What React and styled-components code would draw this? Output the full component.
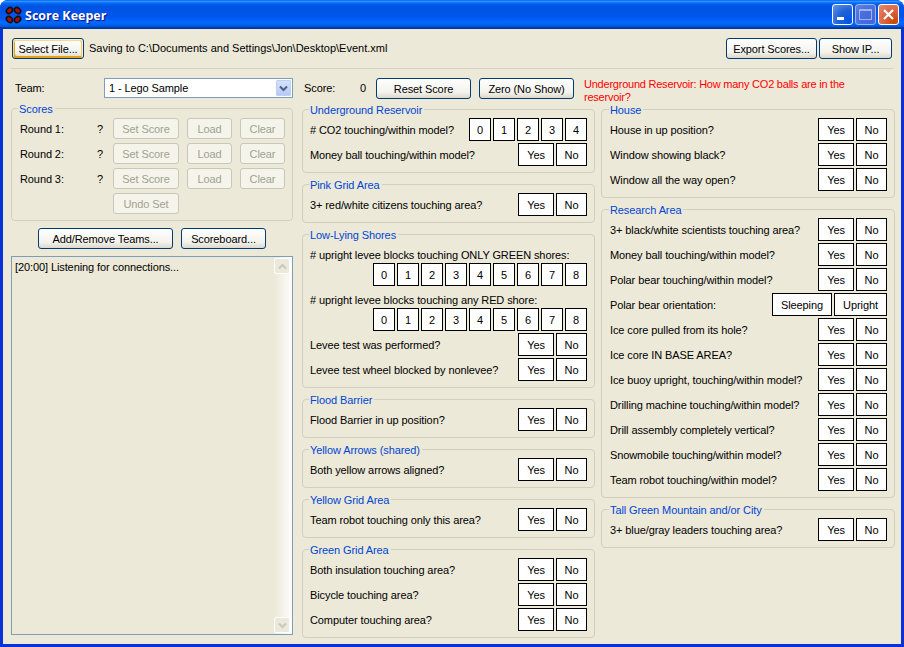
import React from "react";
import styled, { createGlobalStyle } from "styled-components";

const GlobalStyle = createGlobalStyle`
  html, body { margin: 0; padding: 0; background: #fff; }
  body { font-family: "Liberation Sans", Arial, sans-serif; font-size: 11px; letter-spacing: -0.1px; color: #000; }
  * { box-sizing: border-box; }
`;

const Window = styled.div`
  width: 904px;
  height: 647px;
  display: flex;
  flex-direction: column;
  background: #0831d9;
  border-radius: 8px 8px 0 0;
  overflow: hidden;
`;

const TitleBar = styled.div`
  height: 29px;
  flex: none;
  display: flex;
  align-items: center;
  padding: 0 5px 0 5px;
  background: linear-gradient(180deg, #0058ee 0%, #3593ff 4%, #288eff 6%, #127dff 8%, #036ffc 10%, #0262ee 14%, #0057e5 20%, #0054e3 24%, #0055eb 56%, #005bf5 66%, #026afe 76%, #0062ef 86%, #0052d6 92%, #0040ab 94%, #003092 100%);
`;

const Title = styled.div`
  margin-left: 3px;
  padding-top: 1px;
  flex: 1;
  color: #fff;
  font-family: "Open Sans", sans-serif;
  font-size: 12.5px;
  font-weight: 700;
  letter-spacing: 0;
  text-shadow: 1px 1px 1px #0f1089;
`;

const CaptionButton = styled.div`
  width: 21px;
  height: 21px;
  margin-left: 2px;
  border: 1px solid ${({ $kind }) => ($kind === "off" ? "#9fb3ee" : "#fff")};
  border-radius: 3px;
  display: flex;
  align-items: center;
  justify-content: center;
  background: ${({ $kind }) =>
    $kind === "close"
      ? "radial-gradient(circle at 80% 85%, #cc4600 0%, #dc6543 50%, #e58a6f 100%)"
      : $kind === "off"
      ? "radial-gradient(circle at 85% 85%, #3f66dd 0%, #4a6fdf 60%, #6385e4 100%)"
      : "radial-gradient(circle at 85% 85%, #0054e9 0%, #2263d5 50%, #6696eb 100%)"};
`;

const Client = styled.div`
  flex: 1;
  margin: 0 3px 3px 3px;
  background: #ece9d8;
  display: flex;
  flex-direction: column;
  min-height: 0;
`;

const Toolbar = styled.div`
  height: 31px;
  margin: 9px 8px 0 8px;
  padding: 0 1px;
  display: flex;
  align-items: flex-start;
  border-bottom: 1px solid #d3d1c5;
`;

const SavePath = styled.span`
  margin-left: 5px;
  line-height: 21px;
  letter-spacing: 0;
  flex: 1;
`;

const Btn = styled.button`
  width: ${({ $w }) => $w}px;
  height: 21px;
  flex: none;
  padding: 0;
  margin: ${({ $m }) => $m || 0};
  border: 1px solid ${({ disabled }) => (disabled ? "#c9c7ba" : "#003c74")};
  border-radius: 3px;
  font: inherit;
  letter-spacing: inherit;
  color: ${({ disabled }) => (disabled ? "#a1a192" : "#000")};
  background: ${({ disabled }) =>
    disabled ? "#f5f4ea" : "linear-gradient(180deg, #fff 0%, #f3f2ec 70%, #dcd8cc 100%)"};
  box-shadow: ${({ $focus }) =>
    $focus ? "inset -1px 1px #fff0cf, inset 1px 2px #fdd889, inset -2px 2px #fbc761, inset 2px -2px #e5a01a" : "none"};
`;

const Body = styled.div`
  flex: 1;
  display: flex;
  min-height: 0;
  padding: 9px 0 0 8px;
`;

const LeftCol = styled.div`
  width: 282px;
  display: flex;
  flex-direction: column;
  margin-right: 9px;
`;

const MidCol = styled.div`
  width: 293px;
  margin-right: 6px;
`;

const TeamRow = styled.div`
  height: 20px;
  margin-bottom: 10px;
  display: flex;
  align-items: center;
`;

const TeamLabel = styled.span`
  width: 93px;
  padding-left: 4px;
`;

const Combo = styled.div`
  width: 189px;
  height: 20px;
  background: #fff;
  border: 1px solid #7f9db9;
  display: flex;
  align-items: center;
  justify-content: space-between;
  padding: 1px 1px 1px 4px;
`;

const ComboArrow = styled.div`
  width: 15px;
  height: 16px;
  border: 1px solid #bfcff2;
  border-radius: 1px;
  background: linear-gradient(180deg, #d6e1fb 0%, #b4c9f7 100%);
  display: flex;
  align-items: center;
  justify-content: center;
`;

const Group = styled.div`
  position: relative;
  border: 1px solid #d0d0bf;
  border-radius: 4px;
  padding: 8px 7px 6px 7px;
  margin-bottom: 11px;
  display: flex;
  flex-direction: column;
  gap: 2px;
`;

const Legend = styled.span`
  position: absolute;
  top: -7px;
  left: 6px;
  line-height: 14px;
  padding: 0 2px 0 1px;
  background: #ece9d8;
  color: #0046d5;
  white-space: nowrap;
`;

const RightCol = styled.div`
  width: 294px;

  ${Group} {
    padding-left: 8px;
  }

  ${Legend} {
    left: 7px;
  }
`;

const ScoreGrid = styled.div`
  display: grid;
  grid-template-columns: 77px 16px 66px 53px 53px;
  row-gap: 4px;
  align-items: center;
  margin: 1px 0 0 1px;
`;

const RoundBtnCell = styled.div`
  padding-left: 8px;
`;

const TeamActions = styled.div`
  display: flex;
  gap: 8px;
  margin: -4px 0 7px 27px;
`;

const LogBox = styled.div`
  flex: 1;
  margin-bottom: 9px;
  border: 1px solid #7f9db9;
  display: flex;
  min-height: 0;
`;

const LogText = styled.div`
  flex: 1;
  padding: 3px 3px;
  line-height: 14px;
`;

const ScrollBar = styled.div`
  width: 18px;
  padding: 1px 1px 1px 0;
  display: flex;
  flex-direction: column;
  justify-content: space-between;
  background: linear-gradient(90deg, #ece9d8 0%, #f6f5ef 60%, #fdfdfb 100%);
`;

const ScrollBtn = styled.div`
  width: 16px;
  height: 16px;
  border: 1px solid #fff;
  border-radius: 2px;
  background: #ebe9dc;
  display: flex;
  align-items: center;
  justify-content: center;
`;

const ScoreRow = styled.div`
  height: 31px;
  display: flex;
  align-items: flex-start;
  padding-left: 2px;
  line-height: 21px;
`;

const ScoreValue = styled.span`
  width: 72px;
  display: flex;
  justify-content: space-between;
  padding-right: 10px;
`;

const Prompt = styled.div`
  height: 31px;
  width: 300px;
  margin-left: -17px;
  color: #f00;
  line-height: 13px;
  letter-spacing: -0.23px;
`;

const Row = styled.div`
  display: flex;
  align-items: ${({ $stack }) => ($stack ? "flex-start" : "center")};
  flex-direction: ${({ $stack }) => ($stack ? "column" : "row")};
  justify-content: space-between;
  min-height: 23px;
`;

const RowLabel = styled.span`
  white-space: nowrap;
  height: ${({ $stack }) => ($stack ? "20px" : "auto")};
  line-height: ${({ $stack }) => ($stack ? "24px" : "normal")};
`;

const Choices = styled.div`
  display: flex;
  gap: 2px;
  align-self: flex-end;
  margin-left: auto;
`;

const Flat = styled.button`
  width: ${({ $w }) => $w}px;
  height: 23px;
  padding: 0;
  background: #fff;
  border: 1px solid #000;
  font: inherit;
  letter-spacing: inherit;
  color: #000;
`;

const widths = { Yes: 36, No: 31, Sleeping: 60, Upright: 53 };
const yesNo = ["Yes", "No"];
const digits = (n) => Array.from({ length: n }, (_, i) => String(i));

const middle = [
  {
    name: "Underground Reservoir",
    rows: [
      { label: "# CO2 touching/within model?", options: digits(5) },
      { label: "Money ball touching/within model?" },
    ],
  },
  { name: "Pink Grid Area", rows: [{ label: "3+ red/white citizens touching area?" }] },
  {
    name: "Low-Lying Shores",
    rows: [
      { label: "# upright levee blocks touching ONLY GREEN shores:", options: digits(9), stack: true },
      { label: "# upright levee blocks touching any RED shore:", options: digits(9), stack: true },
      { label: "Levee test was performed?" },
      { label: "Levee test wheel blocked by nonlevee?" },
    ],
  },
  { name: "Flood Barrier", rows: [{ label: "Flood Barrier in up position?" }] },
  { name: "Yellow Arrows (shared)", rows: [{ label: "Both yellow arrows aligned?" }] },
  { name: "Yellow Grid Area", rows: [{ label: "Team robot touching only this area?" }] },
  {
    name: "Green Grid Area",
    rows: [
      { label: "Both insulation touching area?" },
      { label: "Bicycle touching area?" },
      { label: "Computer touching area?" },
    ],
  },
];

const right = [
  {
    name: "House",
    rows: [
      { label: "House in up position?" },
      { label: "Window showing black?" },
      { label: "Window all the way open?" },
    ],
  },
  {
    name: "Research Area",
    rows: [
      { label: "3+ black/white scientists touching area?" },
      { label: "Money ball touching/within model?" },
      { label: "Polar bear touching/within model?" },
      { label: "Polar bear orientation:", options: ["Sleeping", "Upright"] },
      { label: "Ice core pulled from its hole?" },
      { label: "Ice core IN BASE AREA?" },
      { label: "Ice buoy upright, touching/within model?" },
      { label: "Drilling machine touching/within model?" },
      { label: "Drill assembly completely vertical?" },
      { label: "Snowmobile touching/within model?" },
      { label: "Team robot touching/within model?" },
    ],
  },
  { name: "Tall Green Mountain and/or City", rows: [{ label: "3+ blue/gray leaders touching area?" }] },
];

const Chevron = ({ up, color, width = 2 }) => (
  <svg width="9" height="7" viewBox="0 0 9 7">
    <path d={up ? "M1 5.5 L4.5 2 L8 5.5" : "M1 1.5 L4.5 5 L8 1.5"} fill="none" stroke={color} strokeWidth={width} />
  </svg>
);

const AppIcon = () => (
  <svg width="17" height="18" viewBox="0 0 17 18">
    {[
      [4.5, 4.5, -40],
      [12.5, 4.5, 40],
      [4.5, 13.5, 40],
      [12.5, 13.5, -40],
    ].map(([x, y, r]) => (
      <g key={`${x}-${y}`} transform={`rotate(${r} ${x} ${y})`}>
        <ellipse cx={x} cy={y} rx="4.2" ry="3.4" fill="#111" />
        <ellipse cx={x} cy={y} rx="2.6" ry="1.8" fill="#a01010" />
      </g>
    ))}
  </svg>
);

const QuestionGroup = ({ name, rows }) => (
  <Group>
    <Legend>{name}</Legend>
    {rows.map((row) => (
      <Row key={row.label} $stack={row.stack}>
        <RowLabel $stack={row.stack}>{row.label}</RowLabel>
        <Choices>
          {(row.options || yesNo).map((opt) => (
            <Flat key={opt} $w={widths[opt] || 22}>
              {opt}
            </Flat>
          ))}
        </Choices>
      </Row>
    ))}
  </Group>
);

const App = () => (
  <>
    <GlobalStyle />
    <Window>
      <TitleBar>
        <AppIcon />
        <Title>Score Keeper</Title>
        <CaptionButton>
          <svg width="13" height="13" viewBox="0 0 13 13">
            <rect x="1" y="9" width="7" height="3" fill="#fff" />
          </svg>
        </CaptionButton>
        <CaptionButton $kind="off">
          <svg width="13" height="13" viewBox="0 0 13 13">
            <rect x="0.5" y="1.5" width="12" height="10" fill="none" stroke="#9fb3ee" />
            <rect x="0" y="1" width="13" height="2" fill="#9fb3ee" />
          </svg>
        </CaptionButton>
        <CaptionButton $kind="close">
          <svg width="13" height="13" viewBox="0 0 13 13">
            <path d="M2 2 L11 11 M11 2 L2 11" stroke="#fff" strokeWidth="2.2" />
          </svg>
        </CaptionButton>
      </TitleBar>
      <Client>
        <Toolbar>
          <Btn $w={72} $focus>Select File...</Btn>
          <SavePath>Saving to C:\Documents and Settings\Jon\Desktop\Event.xml</SavePath>
          <Btn $w={91}>Export Scores...</Btn>
          <Btn $w={73} $m="0 0 0 2px">Show IP...</Btn>
        </Toolbar>
        <Body>
          <LeftCol>
            <TeamRow>
              <TeamLabel>Team:</TeamLabel>
              <Combo>
                1 - Lego Sample
                <ComboArrow>
                  <Chevron color="#4d6185" />
                </ComboArrow>
              </Combo>
            </TeamRow>
            <Group>
              <Legend>Scores</Legend>
              <ScoreGrid>
                {["Round 1:", "Round 2:", "Round 3:"].map((round) => (
                  <React.Fragment key={round}>
                    <span>{round}</span>
                    <span>?</span>
                    <Btn $w={66} disabled>Set Score</Btn>
                    <RoundBtnCell><Btn $w={45} disabled>Load</Btn></RoundBtnCell>
                    <RoundBtnCell><Btn $w={45} disabled>Clear</Btn></RoundBtnCell>
                  </React.Fragment>
                ))}
                <span />
                <span />
                <Btn $w={66} disabled>Undo Set</Btn>
              </ScoreGrid>
            </Group>
            <TeamActions>
              <Btn $w={135}>Add/Remove Teams...</Btn>
              <Btn $w={85}>Scoreboard...</Btn>
            </TeamActions>
            <LogBox>
              <LogText>[20:00] Listening for connections...</LogText>
              <ScrollBar>
                <ScrollBtn><Chevron up color="#c8c8bc" /></ScrollBtn>
                <ScrollBtn><Chevron color="#c8c8bc" /></ScrollBtn>
              </ScrollBar>
            </LogBox>
          </LeftCol>
          <MidCol>
            <ScoreRow>
              <ScoreValue>
                <span>Score:</span>
                <span>0</span>
              </ScoreValue>
              <Btn $w={95}>Reset Score</Btn>
              <Btn $w={95} $m="0 0 0 8px">Zero (No Show)</Btn>
            </ScoreRow>
            {middle.map((group) => (
              <QuestionGroup key={group.name} {...group} />
            ))}
          </MidCol>
          <RightCol>
            <Prompt>Underground Reservoir: How many CO2 balls are in the reservoir?</Prompt>
            {right.map((group) => (
              <QuestionGroup key={group.name} {...group} />
            ))}
          </RightCol>
        </Body>
      </Client>
    </Window>
  </>
);

export default App;
